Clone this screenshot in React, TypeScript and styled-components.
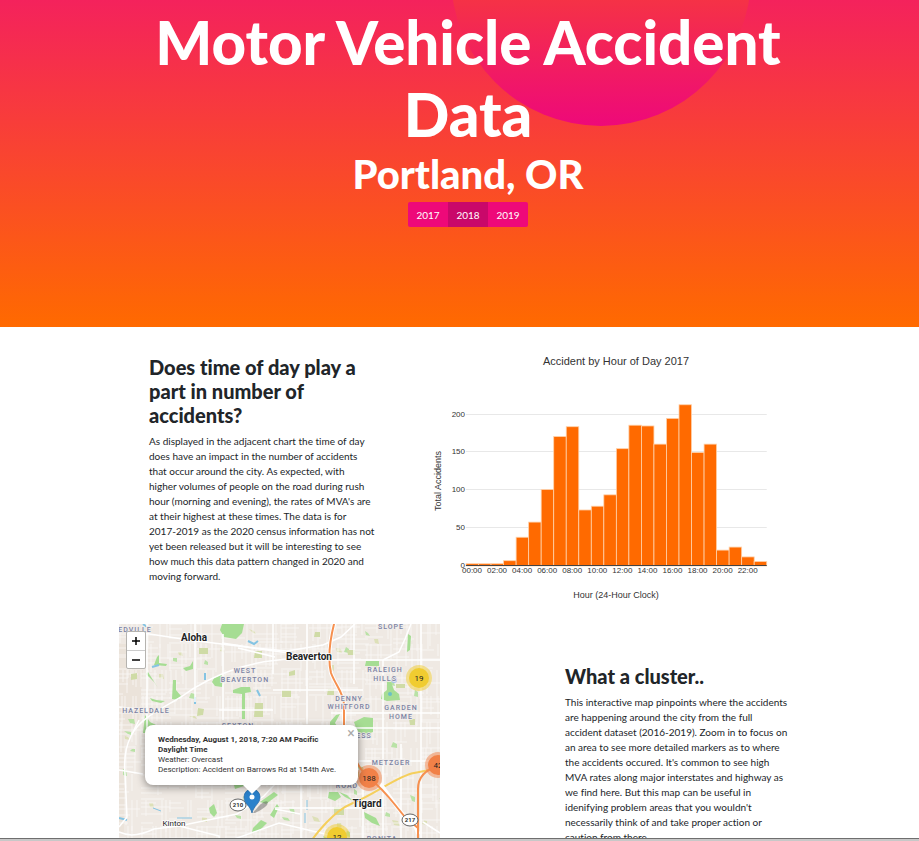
import React from 'react';
import styled, { createGlobalStyle } from 'styled-components';

const GlobalStyle = createGlobalStyle`
  *, *::before, *::after { box-sizing: border-box; }
  body {
    margin: 0;
    background: #fff;
    color: #212529;
    font: 400 10px/15px Lato, sans-serif;
    font-variant-ligatures: none;
  }
  h1, h2, h3, p { margin: 0; }
  h1, h2, h3 { font-weight: 900; }
  button { font-family: inherit; cursor: pointer; }
`;

/* ---------- page frame ---------- */

const Page = styled.div`
  display: flex;
  flex-direction: column;
  height: 100vh;
`;

const Scroller = styled.div`
  flex: 1;
  min-height: 0;
  overflow-y: auto;
  scrollbar-width: none;
`;

const BottomEdge = styled.div`
  flex: none;
  height: 3px;
  border-top: 1px solid #6f6f6f;
  background: #c8c8c8;
`;

/* ---------- header ---------- */

const Masthead = styled.header`
  position: relative;
  overflow: hidden;
  min-height: 327px;
  padding: 6px 104px 100px 121px;
  background: linear-gradient(#f4225c, #ff6a00);
  color: #fff;
  text-align: center;
`;

const Circle = styled.span`
  position: absolute;
  top: -174px;
  left: calc(50% - 9px);
  width: 300px;
  height: 300px;
  border-radius: 50%;
  background: linear-gradient(#ff6a00, #ee0979);
`;

const MastheadContent = styled.div`
  position: relative;
`;

const Title = styled.h1`
  font-size: 60px;
  line-height: 72px;
`;

const Subtitle = styled.h2`
  margin-bottom: 4px;
  font-size: 40px;
  line-height: 48px;
`;

const YearGroup = styled.div`
  display: inline-flex;
  overflow: hidden;
  border-radius: 2px;
`;

const YearButton = styled.button<{ $active?: boolean }>`
  height: 25px;
  width: 40px;
  padding: 0;
  border: 0;
  background: ${p => (p.$active ? '#c9086a' : '#ee0979')};
  color: #fff;
  font-size: 10px;
`;

/* ---------- content ---------- */

const Content = styled.main`
  padding: 27px 0 0 17px;
`;

const Section = styled.section<{ $columns: string }>`
  display: grid;
  grid-template-columns: ${p => p.$columns};
  max-width: 698px;
  margin: 0 auto;
`;

const Copy = styled.div<{ $end?: boolean }>`
  width: 282px;
  padding: ${p => (p.$end ? '40px 0 40px 30px' : '1px 0 1px 30px')};
  justify-self: ${p => (p.$end ? 'end' : 'start')};
`;

const CopyTitle = styled.h2`
  max-width: 226px;
  margin-bottom: 7px;
  font-size: 20px;
  line-height: 24px;
`;

const CopyText = styled.p`
  white-space: pre-line;
`;

const TIME_TEXT = `As displayed in the adjacent chart the time of day
does have an impact in the number of accidents
that occur around the city. As expected, with
higher volumes of people on the road during rush
hour (morning and evening), the rates of MVA's are
at their highest at these times. The data is for
2017-2019 as the 2020 census information has not
yet been released but it will be interesting to see
how much this data pattern changed in 2020 and
moving forward.`;

const CLUSTER_TEXT = `This interactive map pinpoints where the accidents
are happening around the city from the full
accident dataset (2016-2019). Zoom in to focus on
an area to see more detailed markers as to where
the accidents occured. It's common to see high
MVA rates along major interstates and highway as
we find here. But this map can be useful in
idenifying problem areas that you wouldn't
necessarily think of and take proper action or
caution from there.`;

/* ---------- chart ---------- */

const ChartSvg = styled.svg`
  display: block;
  width: 100%;
  height: 270px;
  overflow: visible;
  font-family: 'Liberation Sans', Arial, sans-serif;
  fill: #333;
`;

const HOURS = [3, 3, 3, 7, 38, 58, 101, 171, 184, 74, 79, 94, 155, 186, 185, 161, 195, 213, 150, 161, 21, 25, 12, 6];

function HourChart() {
  const x0 = 49;
  const y0 = 212;
  const step = 12.53;
  const unit = 0.757;
  return (
    <ChartSvg viewBox="0 0 400 270" role="img" aria-label="Accidents by hour of day">
      <text x="199" y="11" fontSize="11" textAnchor="middle">Accident by Hour of Day 2017</text>
      {[50, 100, 150, 200].map(v => (
        <rect key={v} x={x0} y={Math.round(y0 - v * unit) - 1} width={step * 24} height="1" fill="#e8e8e8" />
      ))}
      {[0, 50, 100, 150, 200].map(v => (
        <text key={v} x="48" y={y0 - v * unit + 2} fontSize="8" textAnchor="end">{v}</text>
      ))}
      {HOURS.map((v, i) => (
        <rect key={i} x={x0 + i * step} y={y0 - v * unit} width={step} height={v * unit}
          fill="#ff6a00" stroke="#ffd2ab" strokeWidth=".8" />
      ))}
      <rect x={x0} y={y0 - 1} width={step * 24} height="1" fill="#444" />
      {HOURS.map((_, i) => i).filter(i => i % 2 === 0).map(i => (
        <text key={i} x={x0 + i * step + 6} y="219" fontSize="8" textAnchor="middle">
          {`${String(i).padStart(2, '0')}:00`}
        </text>
      ))}
      <text x="199" y="244" fontSize="9" textAnchor="middle">Hour (24-Hour Clock)</text>
      <text transform="translate(24 127) rotate(-90)" fontSize="9" textAnchor="middle">Total Accidents</text>
    </ChartSvg>
  );
}

/* ---------- map ---------- */

const MapFrame = styled.div`
  position: relative;
  overflow: hidden;
  height: 321px;
  font-family: Roboto, 'Liberation Sans', sans-serif;
`;

const MapSvg = styled.svg`
  display: block;
  width: 100%;
  height: 100%;
`;

const ZoomControl = styled.div`
  position: absolute;
  top: 7px;
  left: 7px;
  display: flex;
  flex-direction: column;
  border: 1px solid #b5b3af;
  border-radius: 2px;
  background: #fff;
`;

const ZoomButton = styled.button`
  display: grid;
  place-items: center;
  width: 18px;
  height: 18px;
  padding: 0;
  border: 0;
  background: none;
  & + & {
    border-top: 1px solid #ccc;
  }
`;

const Popup = styled.div`
  position: absolute;
  top: 101px;
  left: 26px;
  width: 213px;
  height: 60px;
  padding: 10px 13px;
  border-radius: 8px;
  background: #fff;
  box-shadow: 0 2px 9px rgba(0, 0, 0, 0.45);
  font-size: 8px;
  line-height: 10px;
`;

const PopupText = styled.p`
  width: 180px;
  color: #333;
`;

const PopupTip = styled.span`
  position: absolute;
  top: 60px;
  left: 98px;
  border: 9px solid transparent;
  border-top-color: #fff;
  border-bottom: 0;
`;

const PopupClose = styled.button`
  position: absolute;
  top: 3px;
  right: 2px;
  width: 10px;
  height: 10px;
  padding: 0;
  border: 0;
  background: none;
  color: #aaa;
  font-size: 14px;
  line-height: 10px;
`;

let seed = 11;
const rand = () => {
  seed = (seed * 16807) % 2147483647;
  return seed / 2147483647;
};

function makeStreets(): string {
  let d = '';
  for (let x = -4; x < 326; x += 5) {
    for (let y = -6; y < 325; y += 26) {
      if (rand() < 0.72) {
        const dx = x + Math.round(rand() * 3);
        d += `M${dx} ${y}v${Math.round(12 + rand() * 22)}`;
      }
    }
  }
  for (let y = -2; y < 325; y += 5) {
    for (let x = -6; x < 325; x += 28) {
      if (rand() < 0.68) {
        d += `M${x} ${y + Math.round(rand() * 3)}h${Math.round(10 + rand() * 24)}`;
      }
    }
  }
  return d;
}

function makeSpeckles(count: number): string {
  let d = '';
  for (let i = 0; i < count; i += 1) {
    const x = Math.round(rand() * 321);
    const y = Math.round(rand() * 321);
    d += `M${x} ${y}l${Math.round(2 + rand() * 5)} ${Math.round(rand() * 2)}l${Math.round(rand() * 2)} ${Math.round(2 + rand() * 4)}l-${Math.round(3 + rand() * 3)} -1z`;
  }
  return d;
}

const STREETS = makeStreets();
const GREEN_SPECKLES = makeSpeckles(46);
const OLIVE_SPECKLES = makeSpeckles(30);

const PARKS = [
  'M103 0h22l-2 9-6 6-12-2-4-7z',
  'M71 42l3-5v8l-7 2-3-3z',
  'M54 56h3v10l5 6-3 4-6-1z',
  'M26 91l5 7 6 3v8H24z',
  'M114 66l8-3h9l1 5-6 1v26h-3V70l-9-1z',
  'M95 54l7-3 3 3-2 9-7-1-3-4z',
  'M29 48l5 8 5 8-4-6-8-8z',
  'M31 74l6 2 9 1-4 2-9-2z',
  'M38 33l2-2v8l8 1-1 2-12-1z',
  'M268 56l4 2 3 8 5 4 1 6-13 1-6-2 1-5 5-4z',
  'M235 98l10-5 9 1v14l-8 3-8-4z',
  'M211 98l6-7 4-1-5 9 2 3h-7z',
  'M90 184l5-4 3 9-3 4-4-4z',
  'M115 161l12-8 7 2-9 7-9 3z',
  'M141 178l14-10 4 3-12 9z',
  'M134 204l8-8 6 3-8 8-7 1z',
  'M151 191l7-11 2 3-5 11z',
  'M210 168l9 0 3 5-6 4-7-3z',
  'M245 188l12 6 4 8-8-3-7-5z',
  'M247 37h13v5h-14z',
  'M289 10l3 2-1 14-3 2z',
  'M220 168l8 3 6 6-8-4z',
];

const FIELDS = [
  'M136 79h8v14h-9z', 'M80 24h9v6h-9z', 'M136 27h7v7h-8z', 'M12 50l6-1v6l-6 1z',
  'M79 84l6 1-1 6-6 1z', 'M170 48l6-2v5l-6 1z', 'M163 66h9v7h-9z', 'M209 65h6v6h-7z',
  'M277 60h9v4h-9z', 'M215 183h10v8h-10z', 'M290 95h6v6h-5z', 'M232 148h8v5h-8z',
  'M196 8h5v5h-6z', 'M228 26h8v5h-7z',
];

const ROADS = [
  'M24 9L70 16L119 22L170 29',
  'M103 19L136 24L168 27L204 21L222 13L236 0',
  'M13 110C22 94 40 86 62 73C78 61 98 51 119 44C146 36 168 34 187 36H321',
  'M28 0V110M76 0V78M104 10V96M154 0V50M188 0V100',
  'M0 83L28 86M100 86H154M154 66H244M212 89H321',
  'M292 0L286 15L280 28L264 36',
  'M235 0V60M302 0V214M264 36V214',
  'M0 208Q14 215 35 205L60 202L118 190L145 172L156 160',
  'M20 96L12 112Q4 128 6 150L8 193L0 203',
  'M0 146L24 150M119 24L156 33M0 226L50 218L96 222L160 199L210 211',
  'M225 104H321M240 137H321M156 184H252M182 160V238M282 120V260M244 152V220',
  'M60 202L100 212L102 240M156 185L181 190M304 198L321 209',
];

const LABELS: { x: number; y: number; t: string }[] = [
  { x: 16, y: 8, t: 'EDVILLE' },
  { x: 126, y: 49, t: 'WEST' },
  { x: 126, y: 58, t: 'BEAVERTON' },
  { x: 27, y: 89, t: 'HAZELDALE' },
  { x: 119, y: 104, t: 'SEXTON' },
  { x: 272, y: 5, t: 'SLOPE' },
  { x: 266, y: 48, t: 'RALEIGH' },
  { x: 266, y: 57, t: 'HILLS' },
  { x: 230, y: 77, t: 'DENNY' },
  { x: 230, y: 85, t: 'WHITFORD' },
  { x: 282, y: 86, t: 'GARDEN' },
  { x: 282, y: 95, t: 'HOME' },
  { x: 245, y: 114, t: 'ESS' },
  { x: 272, y: 141, t: 'METZGER' },
  { x: 228, y: 164, t: 'ROAD' },
  { x: 263, y: 217, t: 'BONITA' },
];

const CITIES = [
  { x: 75, y: 17, t: 'Aloha', s: 10, w: 700 },
  { x: 190, y: 36, t: 'Beaverton', s: 10, w: 700 },
  { x: 248, y: 183, t: 'Tigard', s: 10, w: 700 },
  { x: 55, y: 202, t: 'Kinton', s: 8, w: 400 },
];

const CLUSTERS = [
  { x: 300, y: 54, n: '19', c: '#f0cc30' },
  { x: 250, y: 154, n: '188', c: '#f18148' },
  { x: 319, y: 141, n: '42', c: '#f18148' },
  { x: 218, y: 213, n: '12', c: '#f0cc30' },
];

function AccidentMap() {
  return (
    <MapFrame>
      <MapSvg viewBox="0 0 321 321" preserveAspectRatio="xMidYMid slice" aria-hidden="true">
        <rect width="321" height="321" fill="#efe9e3" />
        <path d="M0 20H26L20 96L5 115V208H0z" fill="#ebe3da" />
        <path d={OLIVE_SPECKLES} fill="#dde0b8" />
        <path d={STREETS} stroke="#faf8f6" strokeWidth=".8" fill="none" />
        <path d={GREEN_SPECKLES} fill="#b9e2a6" />
        {FIELDS.map(d => <path key={d} d={d} fill="#cfdba6" />)}
        {PARKS.map(d => <path key={d} d={d} fill="#a6dd93" />)}
        <g stroke="#85c4e3" fill="none">
          <path d="M24 0l4 3M33 43l7-2M129 17l6 3 4-3M86 49v7M138 66l3 6M76 73v7M244 110l5 4M0 194l8 2" strokeWidth="2" />
          <path d="M58 194h15M188 176v10M186 199v-10M34 184l8 3" />
        </g>
        <circle cx="271" cy="70" r="2" fill="#6bc0c6" />
        <circle cx="275" cy="56" r="3" fill="#a4bff0" />
        <g fill="none" stroke="#fff" strokeWidth="1.5">
          {ROADS.map(d => <path key={d} d={d} />)}
        </g>
        <g fill="none" strokeLinecap="round">
          <path d="M182 240C186 224 194 213 207 199C216 190 222 184 234 179C257 170 278 152 295 149L321 144" stroke="#f5cf5c" strokeWidth="2" />
          <g stroke="#fff" strokeWidth="4">
            <path d="M215 0C210 20 209 36 212 49C217 62 224 68 225 80V104" />
            <path d="M262 161C268 168 274 179 286 193L296 202L299 209" />
          </g>
          <g stroke="#f6904f" strokeWidth="2">
            <path d="M215 0C210 20 209 36 212 49C217 62 224 68 225 80V104" />
            <path d="M225 104C231 126 240 146 250 154C266 166 274 179 286 193L299 204" />
            <path d="M319 142Q299 148 299 165V321" />
          </g>
        </g>
        <g fill="#7b82a3" stroke="#f1edea" strokeWidth="1.5" paintOrder="stroke" fontSize="7" fontWeight="500" letterSpacing="1" textAnchor="middle">
          {LABELS.map(l => <text key={l.t} x={l.x} y={l.y}>{l.t}</text>)}
        </g>
        <g fill="#222" stroke="#fff" strokeWidth="1.5" paintOrder="stroke" textAnchor="middle">
          {CITIES.map(c => <text key={c.t} x={c.x} y={c.y} fontSize={c.s} fontWeight={c.w}>{c.t}</text>)}
        </g>
        <g fontSize="6" fontWeight="700" textAnchor="middle">
          <ellipse cx="119" cy="181" rx="8" ry="6" fill="#fff" stroke="#666" />
          <text x="119" y="183" fill="#333">210</text>
          <ellipse cx="291" cy="196" rx="8" ry="6" fill="#fff" stroke="#666" />
          <text x="291" y="198" fill="#333">217</text>
        </g>
        {CLUSTERS.map(c => (
          <g key={c.n}>
            <circle cx={c.x} cy={c.y} r="13" fill={c.c} opacity=".5" />
            <circle cx={c.x} cy={c.y} r="10" fill={c.c} />
            <text x={c.x} y={c.y + 3} fontSize="8" textAnchor="middle" fill="#222">{c.n}</text>
          </g>
        ))}
        <path d="M134 189Q145 174 149 178Q149 183 136 189z" fill="#555" opacity=".45" />
        <path d="M133 189C131 181 125 180 125 173A8 8 0 0 1 141 173C141 180 135 181 133 189z" fill="#2a81cb" stroke="#2569a5" strokeWidth=".7" />
        <circle cx="133" cy="173" r="2.5" fill="#fff" />
      </MapSvg>
      <ZoomControl>
        <ZoomButton aria-label="Zoom in">
          <svg width="10" height="10" viewBox="0 0 10 10"><path d="M1 5h8M5 1v8" stroke="#000" strokeWidth="1.5" /></svg>
        </ZoomButton>
        <ZoomButton aria-label="Zoom out">
          <svg width="10" height="10" viewBox="0 0 10 10"><path d="M1 5h8" stroke="#000" strokeWidth="1.5" /></svg>
        </ZoomButton>
      </ZoomControl>
      <Popup>
        <PopupText>
          <strong>Wednesday, August 1, 2018, 7:20 AM Pacific Daylight Time</strong><br />
          Weather: Overcast<br />
          Description: Accident on Barrows Rd at 154th Ave.
        </PopupText>
        <PopupClose aria-label="Close popup">×</PopupClose>
        <PopupTip />
      </Popup>
    </MapFrame>
  );
}

export default function App() {
  return (
    <Page>
      <GlobalStyle />
      <Scroller>
        <Masthead>
          <Circle />
          <MastheadContent>
            <Title>Motor Vehicle Accident Data</Title>
            <Subtitle>Portland, OR</Subtitle>
            <YearGroup role="group" aria-label="Year">
              <YearButton>2017</YearButton>
              <YearButton $active aria-pressed="true">2018</YearButton>
              <YearButton>2019</YearButton>
            </YearGroup>
          </MastheadContent>
        </Masthead>
        <Content>
          <Section $columns="1fr 400px">
            <Copy>
              <CopyTitle>Does time of day play a part in number of accidents?</CopyTitle>
              <CopyText>{TIME_TEXT}</CopyText>
            </Copy>
            <HourChart />
          </Section>
          <Section $columns="321px 1fr">
            <AccidentMap />
            <Copy $end>
              <CopyTitle>What a cluster..</CopyTitle>
              <CopyText>{CLUSTER_TEXT}</CopyText>
            </Copy>
          </Section>
        </Content>
      </Scroller>
      <BottomEdge />
    </Page>
  );
}
